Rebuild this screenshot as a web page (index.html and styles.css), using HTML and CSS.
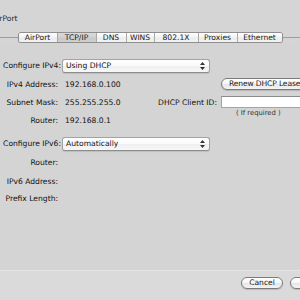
FILE: index.html
```html
<!DOCTYPE html>
<html>
<head>
<meta charset="utf-8">
<link rel="stylesheet" href="styles.css">
</head>
<body>
<div class="win">
  <div class="title">AirPort</div>
  <div class="tabbar">
    <div class="rule"></div>
    <div class="tabs">
      <div class="tab t-air">AirPort</div>
      <div class="tab t-tcp sel">TCP/IP</div>
      <div class="tab t-dns">DNS</div>
      <div class="tab t-wins">WINS</div>
      <div class="tab t-8021">802.1X</div>
      <div class="tab t-prox">Proxies</div>
      <div class="tab t-eth">Ethernet</div>
    </div>
    <div class="rule"></div>
  </div>
  <div class="content">
    <div class="group g1">
      <div class="lbl lbl-cfg">Configure IPv4:</div>
      <div class="popup"><span>Using DHCP</span><svg class="arrows" width="5" height="8" viewBox="0 0 5 8"><path d="M2.5 0 L5 3 L0 3 Z M0 5 L5 5 L2.5 8 Z" fill="#333"/></svg></div>

      <div class="lbl">IPv4 Address:</div>
      <div class="val">192.168.0.100</div>
      <div class="rctl"><div class="btn renew">Renew DHCP Lease</div></div>

      <div class="lbl">Subnet Mask:</div>
      <div class="val">255.255.255.0</div>
      <div class="rlbl">DHCP Client ID:</div>
      <div class="rctl"><div class="field"></div></div>

      <div class="lbl">Router:</div>
      <div class="val">192.168.0.1</div>
      <div class="hint">( If required )</div>
    </div>
    <div class="group g2">
      <div class="lbl lbl-cfg">Configure IPv6:</div>
      <div class="popup"><span>Automatically</span><svg class="arrows" width="5" height="8" viewBox="0 0 5 8"><path d="M2.5 0 L5 3 L0 3 Z M0 5 L5 5 L2.5 8 Z" fill="#333"/></svg></div>

      <div class="lbl">Router:</div>
      <div class="val"></div>

      <div class="lbl">IPv6 Address:</div>
      <div class="val"></div>

      <div class="lbl">Prefix Length:</div>
      <div class="val"></div>
    </div>
  </div>
  <div class="footer">
    <div class="buttons">
      <div class="btn cancel">Cancel</div>
      <div class="btn ok">OK</div>
    </div>
  </div>
</div>
</body>
</html>
```
FILE: styles.css
```css
html, body {
  margin: 0;
  padding: 0;
  width: 300px;
  height: 300px;
  overflow: hidden;
  background: #d5d5d5;
}
.win {
  width: 300px;
  height: 300px;
  font-family: "DejaVu Sans", "Liberation Sans", sans-serif;
  font-size: 7.6px;
  color: #111;
  display: flex;
  flex-direction: column;
}
.title {
  height: 10px;
  line-height: 10px;
  margin-top: 14px;
  margin-left: -8px;
  color: #2a2a2a;
}
.tabbar {
  margin-top: 8px;
  height: 11px;
  display: flex;
  align-items: center;
}
.rule {
  flex: 1;
  height: 1px;
  background: #9d9d9d;
}
.tabs {
  display: flex;
  height: 11px;
  border: 1px solid #8e8e8e;
  border-radius: 3px;
  box-sizing: border-box;
  overflow: hidden;
  box-shadow: 0 1px 1px rgba(0,0,0,0.12);
}
.tab {
  height: 100%;
  line-height: 9px;
  text-align: center;
  background: linear-gradient(#ffffff, #f1f1f1 50%, #e9e9e9 51%, #f4f4f4);
  border-left: 1px solid #a9a9a9;
  box-sizing: border-box;
  color: #1a1a1a;
}
.tab:first-child { border-left: none; }
.tab.sel {
  background: linear-gradient(#dadada, #cfcfcf 50%, #c6c6c6 51%, #d0d0d0);
}
.t-air { width: 38px; }
.t-tcp { width: 39px; }
.t-dns { width: 30px; }
.t-wins { width: 28px; }
.t-8021 { width: 44px; }
.t-prox { width: 39px; }
.t-eth { width: 45px; }

.content {
  height: 227px;
  background: #d4d4d4;
}
.group {
  display: grid;
  grid-template-columns: 60px 97px 60px 120px;
  align-items: center;
}
.g1 {
  margin-top: 13px;
  grid-template-rows: 19px 18px 18px 18px;
}
.g2 {
  margin-top: 5px;
  grid-template-rows: 19px 19px 18px 17px;
}
.lbl {
  grid-column: 1;
  text-align: right;
  padding-right: 2px;
  white-space: nowrap;
}
.lbl.lbl-cfg {
  padding-right: 0;
  margin-right: -1px;
}
.val {
  grid-column: 2;
  padding-left: 5px;
  white-space: nowrap;
}
.rlbl {
  grid-column: 3;
  text-align: right;
  white-space: nowrap;
}
.rctl {
  grid-column: 4;
  padding-left: 4px;
  display: flex;
}
.popup {
  grid-column: 2 / span 2;
  justify-self: start;
  margin-left: 2px;
  width: 148px;
  height: 14px;
  box-sizing: border-box;
  border: 1px solid #a3a3a3;
  border-bottom-color: #8c8c8c;
  border-radius: 3px;
  background: linear-gradient(#ffffff, #fafafa 50%, #efefef 51%, #f7f7f7);
  box-shadow: 0 1px 1px rgba(0,0,0,0.1);
  display: flex;
  align-items: center;
  padding: 0 3px 0 3px;
  white-space: nowrap;
}
.popup .arrows {
  margin-left: auto;
  margin-right: 1px;
}
.btn {
  height: 12px;
  line-height: 10px;
  box-sizing: border-box;
  border: 1px solid #7b7b7b;
  border-radius: 6px;
  background: linear-gradient(#ffffff, #f6f6f6 50%, #e6e6e6 51%, #f3f3f3);
  box-shadow: 0 1px 1px rgba(0,0,0,0.15);
  white-space: nowrap;
  text-align: center;
  color: #1a1a1a;
}
.renew {
  padding: 0 7px 0 7px;
  text-align: left;
  letter-spacing: -0.15px;
}
.field {
  width: 100px;
  height: 12px;
  box-sizing: border-box;
  background: #fff;
  border: 1px solid #a4a4a4;
  border-top-color: #8a8a8a;
}
.hint {
  grid-column: 4;
  align-self: start;
  margin-top: -2px;
  padding-left: 19px;
  font-size: 6.8px;
  line-height: 8px;
  color: #333;
  white-space: nowrap;
}
.footer {
  flex: 1;
  background: #dadada;
  border-top: 1px solid #e3e3e3;
  padding-top: 6px;
}
.buttons {
  display: flex;
  justify-content: flex-end;
  gap: 7px;
  margin-right: -50px;
}
.cancel { width: 42px; }
.ok { width: 60px; }
```
